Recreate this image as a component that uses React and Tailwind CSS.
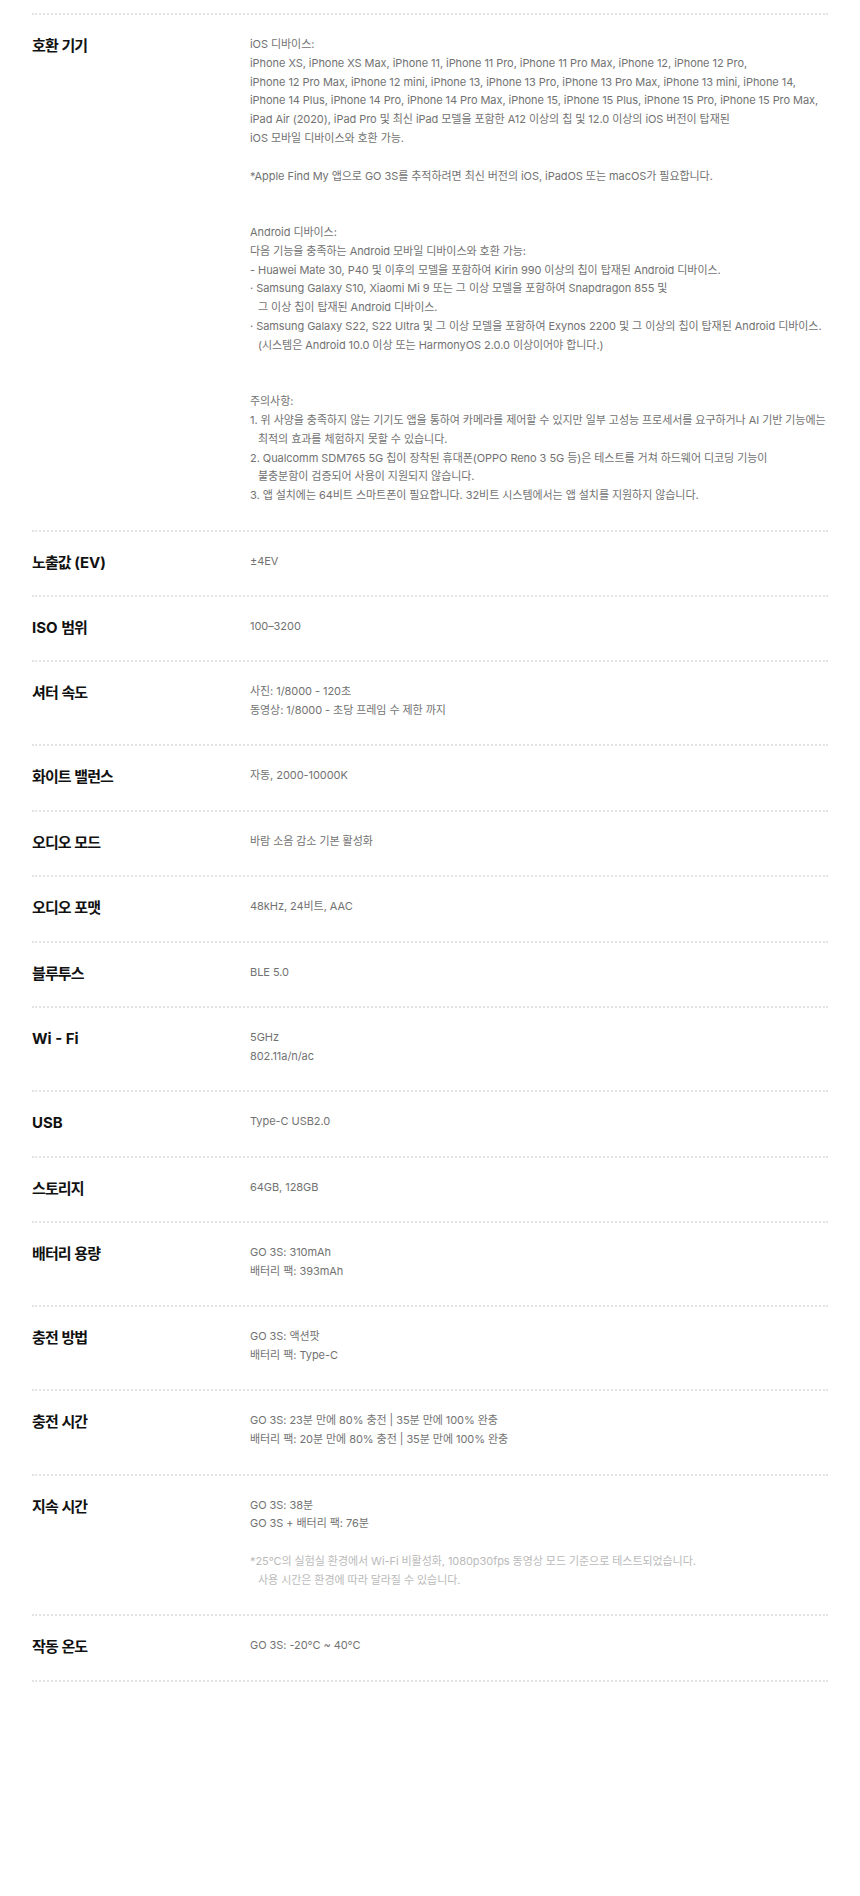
const specs = [
  {
    label: "호환 기기",
    lines: [
      "iOS 디바이스:",
      "iPhone XS, iPhone XS Max, iPhone 11, iPhone 11 Pro, iPhone 11 Pro Max, iPhone 12, iPhone 12 Pro,",
      "iPhone 12 Pro Max, iPhone 12 mini, iPhone 13, iPhone 13 Pro, iPhone 13 Pro Max, iPhone 13 mini, iPhone 14,",
      "iPhone 14 Plus, iPhone 14 Pro, iPhone 14 Pro Max, iPhone 15, iPhone 15 Plus, iPhone 15 Pro, iPhone 15 Pro Max,",
      "iPad Air (2020), iPad Pro 및 최신 iPad 모델을 포함한 A12 이상의 칩 및 12.0 이상의 iOS 버전이 탑재된",
      "iOS 모바일 디바이스와 호환 가능.",
      "",
      "*Apple Find My 앱으로 GO 3S를 추적하려면 최신 버전의 iOS, iPadOS 또는 macOS가 필요합니다.",
      "",
      "",
      "Android 디바이스:",
      "다음 기능을 충족하는 Android 모바일 디바이스와 호환 가능:",
      "- Huawei Mate 30, P40 및 이후의 모델을 포함하여 Kirin 990 이상의 칩이 탑재된 Android 디바이스.",
      "· Samsung Galaxy S10, Xiaomi Mi 9 또는 그 이상 모델을 포함하여 Snapdragon 855 및",
      { t: "그 이상 칩이 탑재된 Android 디바이스.", indent: true },
      "· Samsung Galaxy S22, S22 Ultra 및 그 이상 모델을 포함하여 Exynos 2200 및 그 이상의 칩이 탑재된 Android 디바이스.",
      { t: "(시스템은 Android 10.0 이상 또는 HarmonyOS 2.0.0 이상이어야 합니다.)", indent: true },
      "",
      "",
      "주의사항:",
      "1. 위 사양을 충족하지 않는 기기도 앱을 통하여 카메라를 제어할 수 있지만 일부 고성능 프로세서를 요구하거나 AI 기반 기능에는",
      { t: "최적의 효과를 체험하지 못할 수 있습니다.", indent: true },
      "2. Qualcomm SDM765 5G 칩이 장착된 휴대폰(OPPO Reno 3 5G 등)은 테스트를 거쳐 하드웨어 디코딩 기능이",
      { t: "불충분함이 검증되어 사용이 지원되지 않습니다.", indent: true },
      "3. 앱 설치에는 64비트 스마트폰이 필요합니다. 32비트 시스템에서는 앱 설치를 지원하지 않습니다.",
    ],
  },
  { label: "노출값 (EV)", lines: ["±4EV"] },
  { label: "ISO 범위", lines: ["100–3200"] },
  { label: "셔터 속도", lines: ["사진: 1/8000 - 120초", "동영상: 1/8000 - 초당 프레임 수 제한 까지"] },
  { label: "화이트 밸런스", lines: ["자동, 2000-10000K"] },
  { label: "오디오 모드", lines: ["바람 소음 감소 기본 활성화"] },
  { label: "오디오 포맷", lines: ["48kHz, 24비트, AAC"] },
  { label: "블루투스", lines: ["BLE 5.0"] },
  { label: "Wi - Fi", lines: ["5GHz", "802.11a/n/ac"] },
  { label: "USB", lines: ["Type-C USB2.0"] },
  { label: "스토리지", lines: ["64GB, 128GB"] },
  { label: "배터리 용량", lines: ["GO 3S: 310mAh", "배터리 팩: 393mAh"] },
  { label: "충전 방법", lines: ["GO 3S: 액션팟", "배터리 팩: Type-C"] },
  {
    label: "충전 시간",
    lines: ["GO 3S: 23분 만에 80% 충전 | 35분 만에 100% 완충", "배터리 팩: 20분 만에 80% 충전 | 35분 만에 100% 완충"],
  },
  {
    label: "지속 시간",
    lines: [
      "GO 3S: 38분",
      "GO 3S + 배터리 팩: 76분",
      "",
      { t: "*25°C의 실험실 환경에서 Wi-Fi 비활성화, 1080p30fps 동영상 모드 기준으로 테스트되었습니다.", note: true },
      { t: "사용 시간은 환경에 따라 달라질 수 있습니다.", note: true, indent: true },
    ],
  },
  { label: "작동 온도", lines: ["GO 3S: -20°C ~ 40°C"] },
];

// hangul in the labels runs a bit tighter than the latin around it
function Label({ text }) {
  return text.split(/([가-힣]+)/).map((part, i) =>
    /[가-힣]/.test(part) ? (
      <span key={i} className="tracking-[-0.06em]">
        {part}
      </span>
    ) : (
      part
    )
  );
}

function SpecRow({ label, lines }) {
  return (
    <div className="flex items-start border-b-2 border-dotted border-[#e3e3e3] pt-5 pb-[24.6px]">
      <div className="h-[18.8px] w-[218px] shrink-0 whitespace-nowrap text-[15px] font-bold leading-[22px] text-[#111]">
        <Label text={label} />
      </div>
      <div className="flex-1 text-[11px] leading-[18.8px] tracking-[-0.06px] text-[#727272]">
        {lines.map((line, i) => {
          const item = typeof line === "string" ? { t: line } : line;
          if (!item.t) return <div key={i} className="h-[18.8px]" />;
          return (
            <div
              key={i}
              className={`whitespace-nowrap ${item.indent ? "pl-2" : ""} ${item.note ? "text-[#bababa]" : ""}`}
            >
              {item.t}
            </div>
          );
        })}
      </div>
    </div>
  );
}

export default function App() {
  return (
    <div className="min-h-screen bg-white px-8 pt-[13px] font-['Inter','Noto_Sans_CJK_KR',sans-serif]">
      <div className="border-t-2 border-dotted border-[#e3e3e3]">
        {specs.map((s) => (
          <SpecRow key={s.label} label={s.label} lines={s.lines} />
        ))}
      </div>
    </div>
  );
}
